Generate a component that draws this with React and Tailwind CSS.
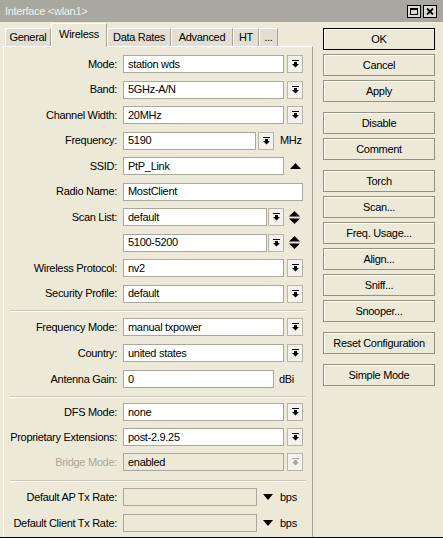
import React from 'react';

function DropIcon({ dim }) {
    return (
        <svg width="7" height="8" viewBox="0 0 7 8" fill={dim ? '#aaa79b' : '#000'}>
            <rect x="0" y="0" width="7" height="1" />
            <rect x="2" y="2" width="3" height="2" />
            <path d="M0 4H7L3.5 7.5Z" />
        </svg>
    );
}

function DropButton({ dim }) {
    return (
        <div className="w-[16px] h-[18px] flex items-center justify-center border border-[#b8b5a8] bg-[#f3f2ec]">
            <DropIcon dim={dim} />
        </div>
    );
}

function Field({ width, value, dim }) {
    return (
        <div className={`${width} h-[18px] flex items-center pl-[4px] border border-[#aaa89c] ${dim ? 'bg-[#ece9d8]' : 'bg-white'}`}>
            {value}
        </div>
    );
}

function Row({ label, dim, children }) {
    return (
        <div className="flex items-center h-[18px]">
            <div className={`w-[113px] text-right whitespace-nowrap ${dim ? 'text-[#aaa79b]' : 'text-black'}`}>{label ? label + ':' : ''}</div>
            <div className="ml-[6px] flex items-center">{children}</div>
        </div>
    );
}

function UpDown() {
    return (
        <svg width="11" height="13" viewBox="0 0 11 13" fill="#000" className="ml-[5px]">
            <path d="M0 5.5H11L5.5 0Z" />
            <path d="M0 7.5H11L5.5 13Z" />
        </svg>
    );
}

function Separator({ top, bottom }) {
    return <div className={`${top} ${bottom} mx-[6px] h-[2px] border-t border-[#cbc8b9] border-b border-b-white`} />;
}

function SideButton({ label, main }) {
    return (
        <div className={`h-[22px] flex items-center justify-center bg-[#ece9d8] shadow-[inset_1px_1px_0_#ffffff] ${main ? 'border border-black' : 'border border-[#94917f]'}`}>
            {label}
        </div>
    );
}

const tabs = [
    { name: 'General', w: 'w-[46px]' },
    { name: 'Wireless', w: 'w-[56px]', active: true },
    { name: 'Data Rates', w: 'w-[64px]' },
    { name: 'Advanced', w: 'w-[62px]' },
    { name: 'HT', w: 'w-[26px]' },
    { name: '...', w: 'w-[19px]' },
];

export default function App() {
    return (
        <div className="w-[443px] h-[538px] bg-[#ece9d8] border-b border-black flex flex-col text-[11px] leading-none tracking-[-0.3px] text-black font-['Liberation_Sans',Arial,sans-serif] overflow-hidden">

            {/* title bar */}
            <div className="h-[22px] shrink-0 bg-[#a9a8a0] flex items-center justify-between pl-[5px] pr-[6px]">
                <span className="text-[#f0f0ea]">{'Interface <wlan1>'}</span>
                <div className="flex gap-[2px]">
                    <div className="w-[14px] h-[13px] border border-black bg-[#dcdad1] flex items-center justify-center">
                        <div className="w-[8px] h-[7px] border border-black border-t-2" />
                    </div>
                    <div className="w-[14px] h-[13px] border border-black bg-[#dcdad1] flex items-center justify-center">
                        <svg width="8" height="7" viewBox="0 0 8 7" stroke="#000" strokeWidth="1.8">
                            <path d="M1 0.5L7 6.5M7 0.5L1 6.5" />
                        </svg>
                    </div>
                </div>
            </div>

            <div className="flex flex-1">

                {/* left: tabs + panel */}
                <div className="ml-[3px] w-[310px] flex flex-col">
                    <div className="h-[24px] flex items-end pl-[2px]">
                        {tabs.map((t) => (
                            <div
                                key={t.name}
                                className={`${t.w} flex items-center justify-center border-t border-l border-white border-r border-r-[#a6a394] ${t.active ? 'h-[24px] bg-[#ece9d8] -mb-[1px] pb-[3px] z-10' : 'h-[18px] bg-[#e2dfd2]'}`}
                            >
                                {t.name}
                            </div>
                        ))}
                    </div>

                    <div className="flex-1 border-t border-l border-white border-r border-r-[#a6a394] pt-[8px]">
                        <div className="flex flex-col gap-[7.5px]">
                            <Row label="Mode"><Field width="w-[161px]" value="station wds" /><div className="ml-[3px]"><DropButton /></div></Row>
                            <Row label="Band"><Field width="w-[161px]" value="5GHz-A/N" /><div className="ml-[3px]"><DropButton /></div></Row>
                            <Row label="Channel Width"><Field width="w-[161px]" value="20MHz" /><div className="ml-[3px]"><DropButton /></div></Row>
                            <Row label="Frequency">
                                <Field width="w-[133px]" value="5190" />
                                <div className="ml-[2px]"><DropButton /></div>
                                <span className="ml-[6px]">MHz</span>
                            </Row>
                            <Row label="SSID">
                                <Field width="w-[161px]" value="PtP_Link" />
                                <svg width="11" height="6" viewBox="0 0 11 6" fill="#000" className="ml-[6px]">
                                    <path d="M0 6H11L5.5 0Z" />
                                </svg>
                            </Row>
                            <Row label="Radio Name"><Field width="w-[180px]" value="MostClient" /></Row>
                            <Row label="Scan List">
                                <Field width="w-[144px]" value="default" />
                                <div className="ml-[1px]"><DropButton /></div>
                                <UpDown />
                            </Row>
                            <Row label="">
                                <Field width="w-[144px]" value="5100-5200" />
                                <div className="ml-[1px]"><DropButton /></div>
                                <UpDown />
                            </Row>
                            <Row label="Wireless Protocol"><Field width="w-[161px]" value="nv2" /><div className="ml-[3px]"><DropButton /></div></Row>
                            <Row label="Security Profile"><Field width="w-[161px]" value="default" /><div className="ml-[3px]"><DropButton /></div></Row>
                        </div>

                        <Separator top="mt-[7.5px]" bottom="mb-[6px]" />

                        <div className="flex flex-col gap-[8px]">
                            <Row label="Frequency Mode"><Field width="w-[161px]" value="manual txpower" /><div className="ml-[3px]"><DropButton /></div></Row>
                            <Row label="Country"><Field width="w-[161px]" value="united states" /><div className="ml-[3px]"><DropButton /></div></Row>
                            <Row label="Antenna Gain">
                                <Field width="w-[151px]" value="0" />
                                <span className="ml-[5px]">dBi</span>
                            </Row>
                        </div>

                        <Separator top="mt-[8px]" bottom="mb-[5px]" />

                        <div className="flex flex-col gap-[7px]">
                            <Row label="DFS Mode"><Field width="w-[161px]" value="none" /><div className="ml-[3px]"><DropButton /></div></Row>
                            <Row label="Proprietary Extensions"><Field width="w-[161px]" value="post-2.9.25" /><div className="ml-[3px]"><DropButton /></div></Row>
                            <Row label="Bridge Mode" dim><Field width="w-[161px]" value="enabled" dim /><div className="ml-[3px]"><DropButton dim /></div></Row>
                        </div>

                        <Separator top="mt-[9px]" bottom="mb-[6px]" />

                        <div className="flex flex-col gap-[8px]">
                            {['Default AP Tx Rate', 'Default Client Tx Rate'].map((l) => (
                                <Row key={l} label={l}>
                                    <Field width="w-[134px]" value="" dim />
                                    <svg width="10" height="6" viewBox="0 0 10 6" fill="#000" className="ml-[6px]">
                                        <path d="M0 0H10L5 6Z" />
                                    </svg>
                                    <span className="ml-[7px]">bps</span>
                                </Row>
                            ))}
                        </div>
                    </div>
                </div>

                {/* right: buttons */}
                <div className="ml-[10px] w-[112px] pt-[6px] flex flex-col gap-[10px]">
                    <div className="flex flex-col gap-[4px]">
                        <SideButton label="OK" main />
                        <SideButton label="Cancel" />
                        <SideButton label="Apply" />
                    </div>
                    <div className="flex flex-col gap-[4px]">
                        <SideButton label="Disable" />
                        <SideButton label="Comment" />
                    </div>
                    <div className="flex flex-col gap-[4px]">
                        <SideButton label="Torch" />
                        <SideButton label="Scan..." />
                        <SideButton label="Freq. Usage..." />
                        <SideButton label="Align..." />
                        <SideButton label="Sniff..." />
                        <SideButton label="Snooper..." />
                    </div>
                    <SideButton label="Reset Configuration" />
                    <SideButton label="Simple Mode" />
                </div>
            </div>
        </div>
    );
}
